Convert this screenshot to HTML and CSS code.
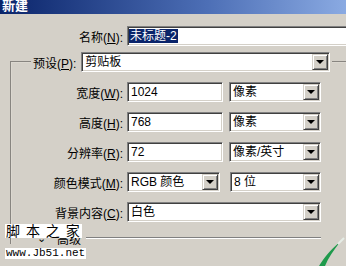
FILE: index.html
```html
<!DOCTYPE html>
<html>
<head>
    <title>新建</title>
    <link rel="stylesheet" href="styles.css">
</head>
<body>
    <div class="titlebar">新建</div>
    <div class="dialog">
        <div class="row name-row">
            <label class="label name-label">名称(<u>N</u>):</label>
            <div class="field name-field"><span class="sel">未标题-2</span></div>
        </div>
        <fieldset class="group">
            <legend>
                <label class="label">预设(<u>P</u>):</label>
                <div class="combo preset">剪贴板<span class="arrow"></span></div>
            </legend>
            <div class="row">
                <label class="label">宽度(<u>W</u>):</label>
                <div class="field num">1024</div>
                <div class="combo unit">像素<span class="arrow"></span></div>
            </div>
            <div class="row">
                <label class="label">高度(<u>H</u>):</label>
                <div class="field num">768</div>
                <div class="combo unit">像素<span class="arrow"></span></div>
            </div>
            <div class="row">
                <label class="label">分辨率(<u>R</u>):</label>
                <div class="field num">72</div>
                <div class="combo unit">像素/英寸<span class="arrow"></span></div>
            </div>
            <div class="row">
                <label class="label">颜色模式(<u>M</u>):</label>
                <div class="combo mode">RGB 颜色<span class="arrow"></span></div>
                <div class="combo depth">8 位<span class="arrow"></span></div>
            </div>
            <div class="row">
                <label class="label">背景内容(<u>C</u>):</label>
                <div class="combo bg">白色<span class="arrow"></span></div>
            </div>
            <div class="advanced">
                <span class="chev">&#8964;</span>
                <span class="adv-text">高级</span>
                <span class="sep"></span>
            </div>
        </fieldset>
    </div>

    <!-- site watermark over the screenshot -->
    <div class="watermark">
        <div class="wm-title">脚 本 之 家</div>
        <div class="wm-url">www.Jb51.net</div>
    </div>
    <svg class="swoosh" width="30" height="30" viewBox="0 0 30 30">
        <path d="M3 30 C8 22 14 14 24 6 C18 14 12 22 9 30 Z" fill="#1f9a4c"/>
        <path d="M22 8 L28 2" stroke="#e6ece6" stroke-width="2"/>
    </svg>
</body>
</html>
```

FILE: styles.css
```css
body {
    margin: 0;
    width: 346px;
    height: 266px;
    overflow: hidden;
    background-color: #d4d0c8;
    font-family: "Liberation Sans", "Noto Sans CJK SC", sans-serif;
    font-size: 12px;
    color: #000;
    position: relative;
}

.titlebar {
    height: 14px;
    line-height: 12px;
    padding-left: 2px;
    color: #fff;
    font-weight: bold;
    font-size: 13px;
    overflow: hidden;
    background: linear-gradient(to right, #0a246a, #4d6fb6 60%, #8aaae2);
}

.dialog {
    padding-top: 12px;
}

.row {
    display: flex;
    align-items: center;
    height: 20px;
    margin-bottom: 10px;
}

.row > * {
    flex-shrink: 0;
}

.label {
    width: 111px;
    margin-right: 4px;
    text-align: right;
    white-space: nowrap;
}

.name-row {
    margin-bottom: 0;
}

.name-label {
    width: 123px;
}

/* sunken edit box */
.field {
    box-sizing: border-box;
    height: 20px;
    padding: 1px 3px;
    line-height: 16px;
    background-color: #fff;
    border: 1px solid;
    border-color: #808080 #fff #fff #808080;
    box-shadow: inset 1px 1px 0 #404040, inset -1px -1px 0 #d4d0c8;
    white-space: nowrap;
}

.name-field {
    width: 230px;
    padding-left: 1px;
}

.sel {
    background-color: #0a246a;
    color: #fff;
    padding: 0 1px;
}

.num {
    width: 96px;
    margin-right: 6px;
}

.combo {
    box-sizing: border-box;
    height: 20px;
    padding: 1px 3px;
    line-height: 16px;
    background-color: #fff;
    border: 1px solid;
    border-color: #808080 #fff #fff #808080;
    box-shadow: inset 1px 1px 0 #404040, inset -1px -1px 0 #d4d0c8;
    position: relative;
    white-space: nowrap;
}

/* raised drop-down button */
.arrow {
    position: absolute;
    right: 1px;
    top: 1px;
    width: 16px;
    height: 16px;
    box-sizing: border-box;
    background-color: #d4d0c8;
    border: 1px solid;
    border-color: #d4d0c8 #404040 #404040 #d4d0c8;
    box-shadow: inset 1px 1px 0 #fff, inset -1px -1px 0 #808080;
}

.arrow::after {
    content: "";
    position: absolute;
    left: 3px;
    top: 5px;
    border-left: 4px solid transparent;
    border-right: 4px solid transparent;
    border-top: 4px solid #000;
}

.unit {
    width: 92px;
}

.mode {
    width: 93px;
    margin-right: 10px;
}

.depth {
    width: 91px;
}

.bg {
    width: 194px;
}

.group {
    width: 400px;
    margin: 6px 0 0 10px;
    padding: 10px 0 0 0;
    min-width: 0;
    border: 2px groove #dcd8d0;
    border-right: none;
    border-bottom: none;
}

.group legend {
    margin-left: 19px;
    padding: 0 2px;
    height: 20px;
    display: flex;
    align-items: center;
}

.group legend .label {
    width: auto;
    margin-right: 5px;
}

.preset {
    width: 249px;
}

.advanced {
    display: flex;
    align-items: center;
    height: 12px;
    margin-top: 8px;
    padding-left: 25px;
}

.chev {
    width: 20px;
    font-size: 11px;
    line-height: 8px;
}

.adv-text {
    margin-right: 5px;
}

.sep {
    width: 235px;
    height: 0;
    border-top: 1px solid #808080;
    border-bottom: 1px solid #fff;
}

.watermark {
    position: absolute;
    left: 5px;
    top: 224px;
}

.wm-title {
    width: fit-content;
    background-color: #fff;
    font-size: 14px;
    line-height: 14px;
    padding: 0 1px;
    letter-spacing: 1px;
}

.wm-url {
    width: fit-content;
    margin-top: 10px;
    background-color: #fff;
    font-family: "Liberation Mono", monospace;
    font-size: 11px;
    line-height: 11px;
    padding: 0 1px;
}

.swoosh {
    position: absolute;
    left: 316px;
    top: 236px;
}
```
